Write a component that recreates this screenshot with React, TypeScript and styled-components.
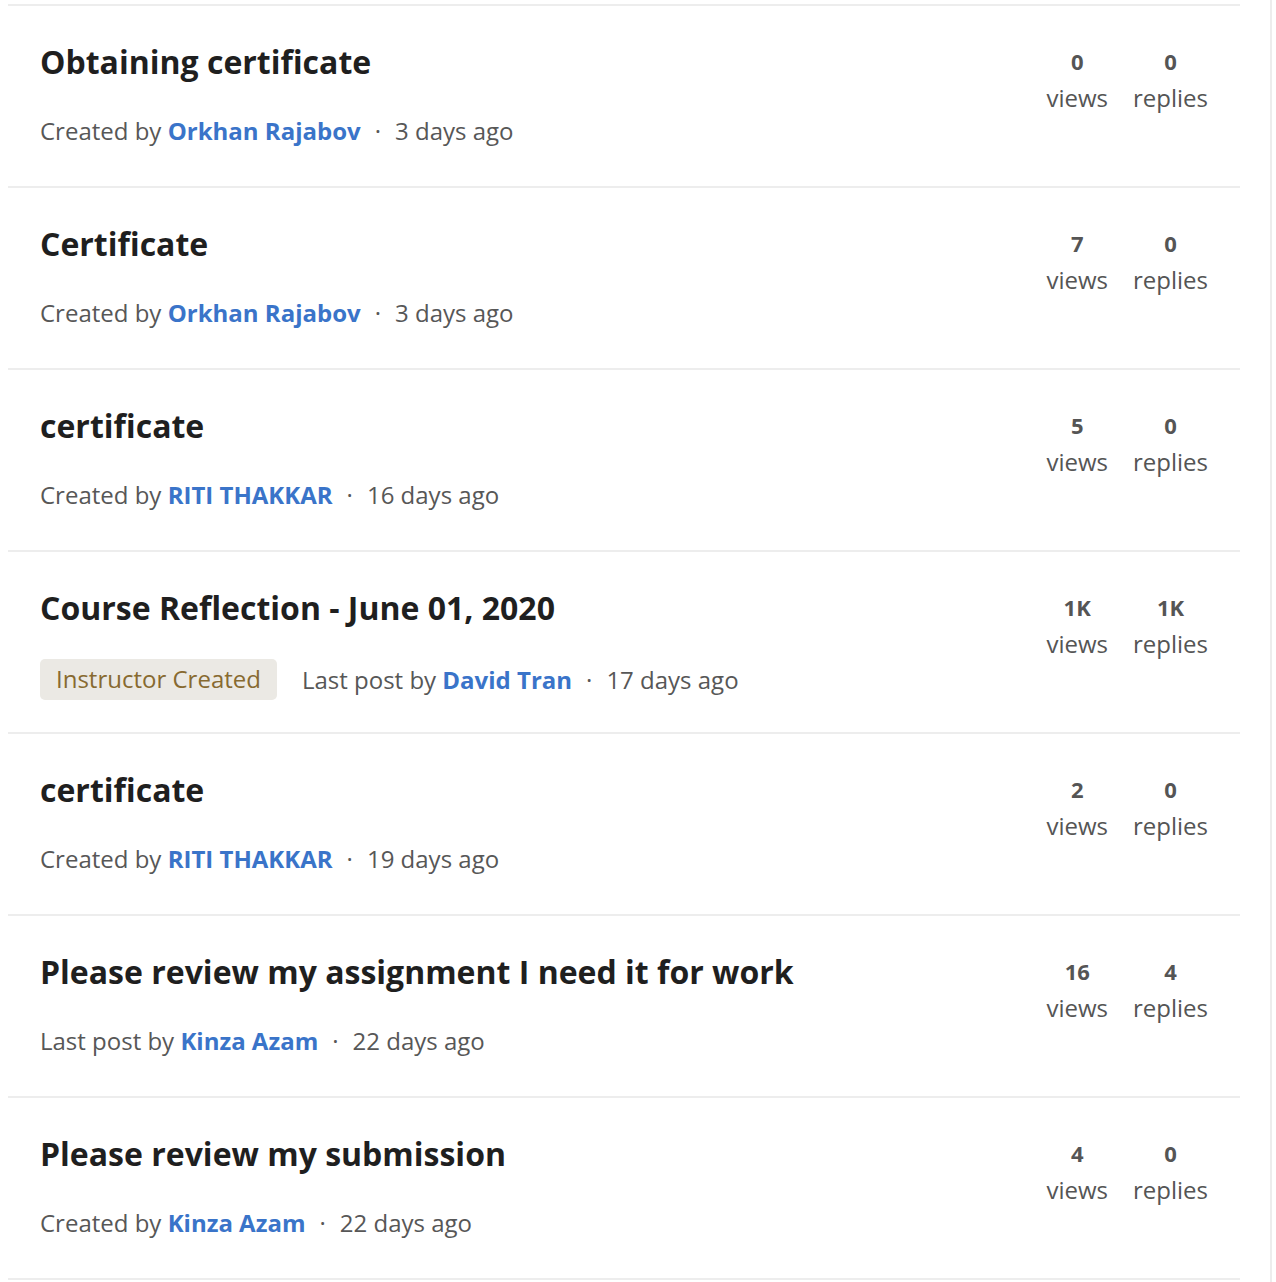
import React from 'react';
import styled, { createGlobalStyle } from 'styled-components';

const GlobalStyle = createGlobalStyle`
  html, body {
    margin: 0;
    padding: 0;
    background: #ffffff;
  }
  body {
    font-family: 'Open Sans', 'Noto Sans', sans-serif;
    color: #1f1f1f;
  }
`;

interface Thread {
  title: string;
  prefix: string;
  author: string;
  when: string;
  views: string;
  replies: string;
  instructor?: boolean;
}

const threads: Thread[] = [
  { title: 'Obtaining certificate', prefix: 'Created by', author: 'Orkhan Rajabov', when: '3 days ago', views: '0', replies: '0' },
  { title: 'Certificate', prefix: 'Created by', author: 'Orkhan Rajabov', when: '3 days ago', views: '7', replies: '0' },
  { title: 'certificate', prefix: 'Created by', author: 'RITI THAKKAR', when: '16 days ago', views: '5', replies: '0' },
  {
    title: 'Course Reflection - June 01, 2020',
    prefix: 'Last post by',
    author: 'David Tran',
    when: '17 days ago',
    views: '1K',
    replies: '1K',
    instructor: true,
  },
  { title: 'certificate', prefix: 'Created by', author: 'RITI THAKKAR', when: '19 days ago', views: '2', replies: '0' },
  {
    title: 'Please review my assignment I need it for work',
    prefix: 'Last post by',
    author: 'Kinza Azam',
    when: '22 days ago',
    views: '16',
    replies: '4',
  },
  { title: 'Please review my submission', prefix: 'Created by', author: 'Kinza Azam', when: '22 days ago', views: '4', replies: '0' },
];

const App = () => {
  return (
    <>
      <GlobalStyle />
      <Page>
        <ThreadList>
          {threads.map((t, i) => (
            <ThreadRow key={i}>
              <ThreadMain>
                <ThreadTitle>{t.title}</ThreadTitle>
                <MetaLine>
                  {t.instructor && <Badge>Instructor Created</Badge>}
                  <span>{t.prefix}&nbsp;</span>
                  <AuthorLink href="#">{t.author}</AuthorLink>
                  <Dot>·</Dot>
                  <span>{t.when}</span>
                </MetaLine>
              </ThreadMain>
              <Stats>
                <Stat>
                  <StatNumber>{t.views}</StatNumber>
                  <StatLabel>views</StatLabel>
                </Stat>
                <Stat>
                  <StatNumber>{t.replies}</StatNumber>
                  <StatLabel>replies</StatLabel>
                </Stat>
              </Stats>
            </ThreadRow>
          ))}
        </ThreadList>
        <Gutter />
      </Page>
    </>
  );
};

export default App;

const Page = styled.div`
  display: flex;
  align-items: stretch;
  min-height: 1282px;
  padding-left: 8px;
`;

const ThreadList = styled.div`
  width: 1232px;
  margin-top: 4px;
  border-top: 2px solid #ededed;
`;

const Gutter = styled.div`
  width: 30px;
  border-right: 2px solid #ededed;
`;

const ThreadRow = styled.div`
  display: flex;
  justify-content: space-between;
  align-items: flex-start;
  height: 180px;
  box-sizing: content-box;
  padding: 0 32px 0 32px;
  border-bottom: 2px solid #ededed;
`;

const ThreadMain = styled.div`
  display: flex;
  flex-direction: column;
  padding-top: 36px;
`;

const ThreadTitle = styled.div`
  font-size: 32px;
  font-weight: 700;
  line-height: 40px;
  color: #1f1f1f;
`;

const MetaLine = styled.div`
  display: flex;
  align-items: center;
  margin-top: 31px;
  font-size: 24px;
  line-height: 36px;
  color: #575757;
  white-space: pre;
`;

const Badge = styled.span`
  display: inline-block;
  padding: 2px 16px 3px;
  margin-right: 25px;
  border-radius: 5px;
  background: #ebe9e4;
  color: #876a30;
`;

const AuthorLink = styled.a`
  color: #3a74c9;
  font-weight: 700;
  text-decoration: none;
`;

const Dot = styled.span`
  margin: 0 14px;
`;

const Stats = styled.div`
  display: flex;
  gap: 25px;
  padding-top: 39px;
`;

const Stat = styled.div`
  display: flex;
  flex-direction: column;
  align-items: center;
  color: #555555;
`;

const StatNumber = styled.span`
  font-size: 22px;
  font-weight: 700;
  line-height: 32px;
`;

const StatLabel = styled.span`
  font-size: 24px;
  line-height: 42px;
`;
